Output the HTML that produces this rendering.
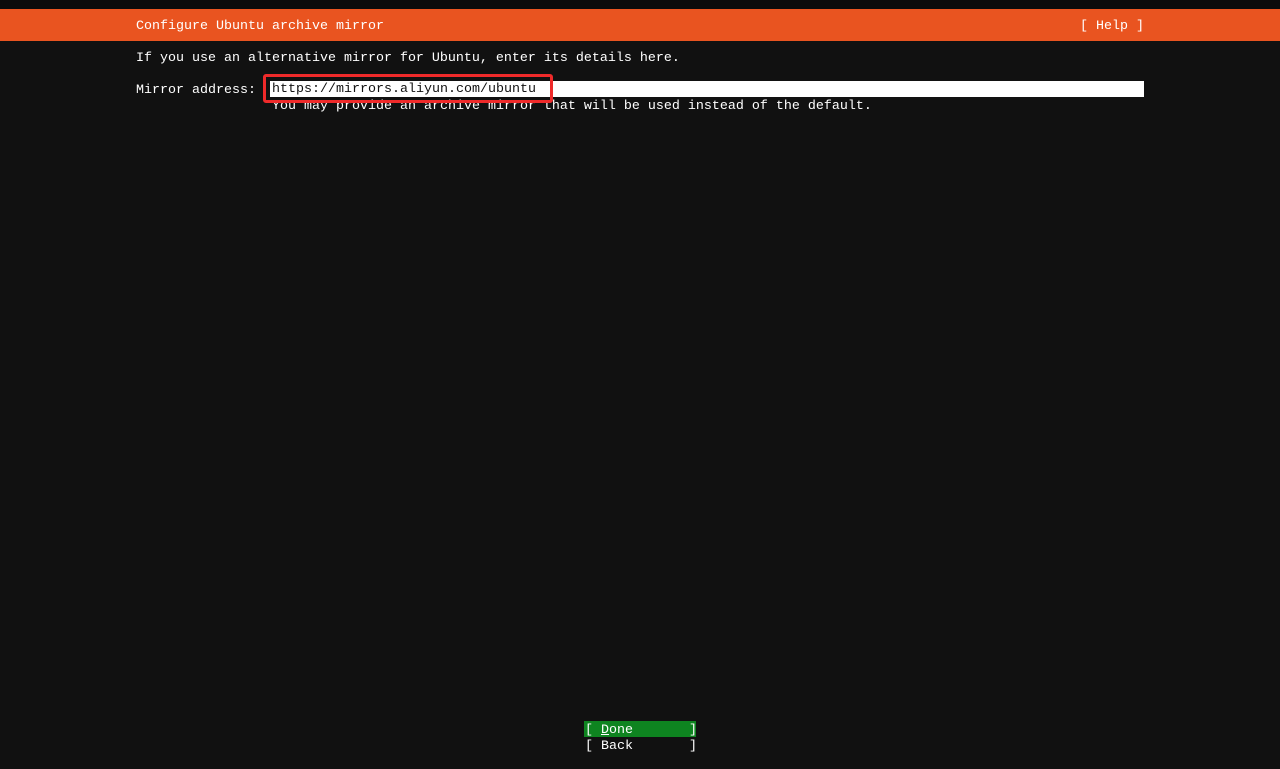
<!DOCTYPE html>
<html><head><style>
body{margin:0;width:1280px;height:769px;background:#111;overflow:hidden;position:relative;font-family:"Liberation Mono","DejaVu Sans Mono",monospace;font-size:13.33px;color:#fff}
.t{position:absolute;white-space:pre;line-height:16px;height:16px}
</style></head><body>
<div style="position:absolute;left:0;top:0;width:1280px;height:9px;background:#0b0b0b"></div>
<div style="position:absolute;left:0;top:9px;width:1280px;height:32px;background:#e95420"></div>
<div class="t" style="left:136px;top:19px">Configure Ubuntu archive mirror</div>
<div class="t" style="left:1080px;top:19px">[ Help ]</div>
<div class="t" style="left:136px;top:51px">If you use an alternative mirror for Ubuntu, enter its details here.</div>
<div class="t" style="left:136px;top:83px">Mirror address:</div>
<div style="position:absolute;left:270px;top:81px;width:874px;height:16px;background:#fff"></div>
<div class="t" style="left:272px;top:82px;color:#111">https://mirrors.aliyun.com/ubuntu</div>
<div class="t" style="left:272px;top:99px">You may provide an archive mirror that will be used instead of the default.</div>
<div style="position:absolute;left:263px;top:74px;width:284px;height:23px;border:3px solid #ef2a2a;border-radius:3px"></div>
<div style="position:absolute;left:584px;top:721px;width:112px;height:16px;background:#0e8420"></div>
<div class="t" style="left:585px;top:723px">[ <u>D</u>one       ]</div>
<div class="t" style="left:585px;top:739px">[ Back       ]</div>
</body></html>
